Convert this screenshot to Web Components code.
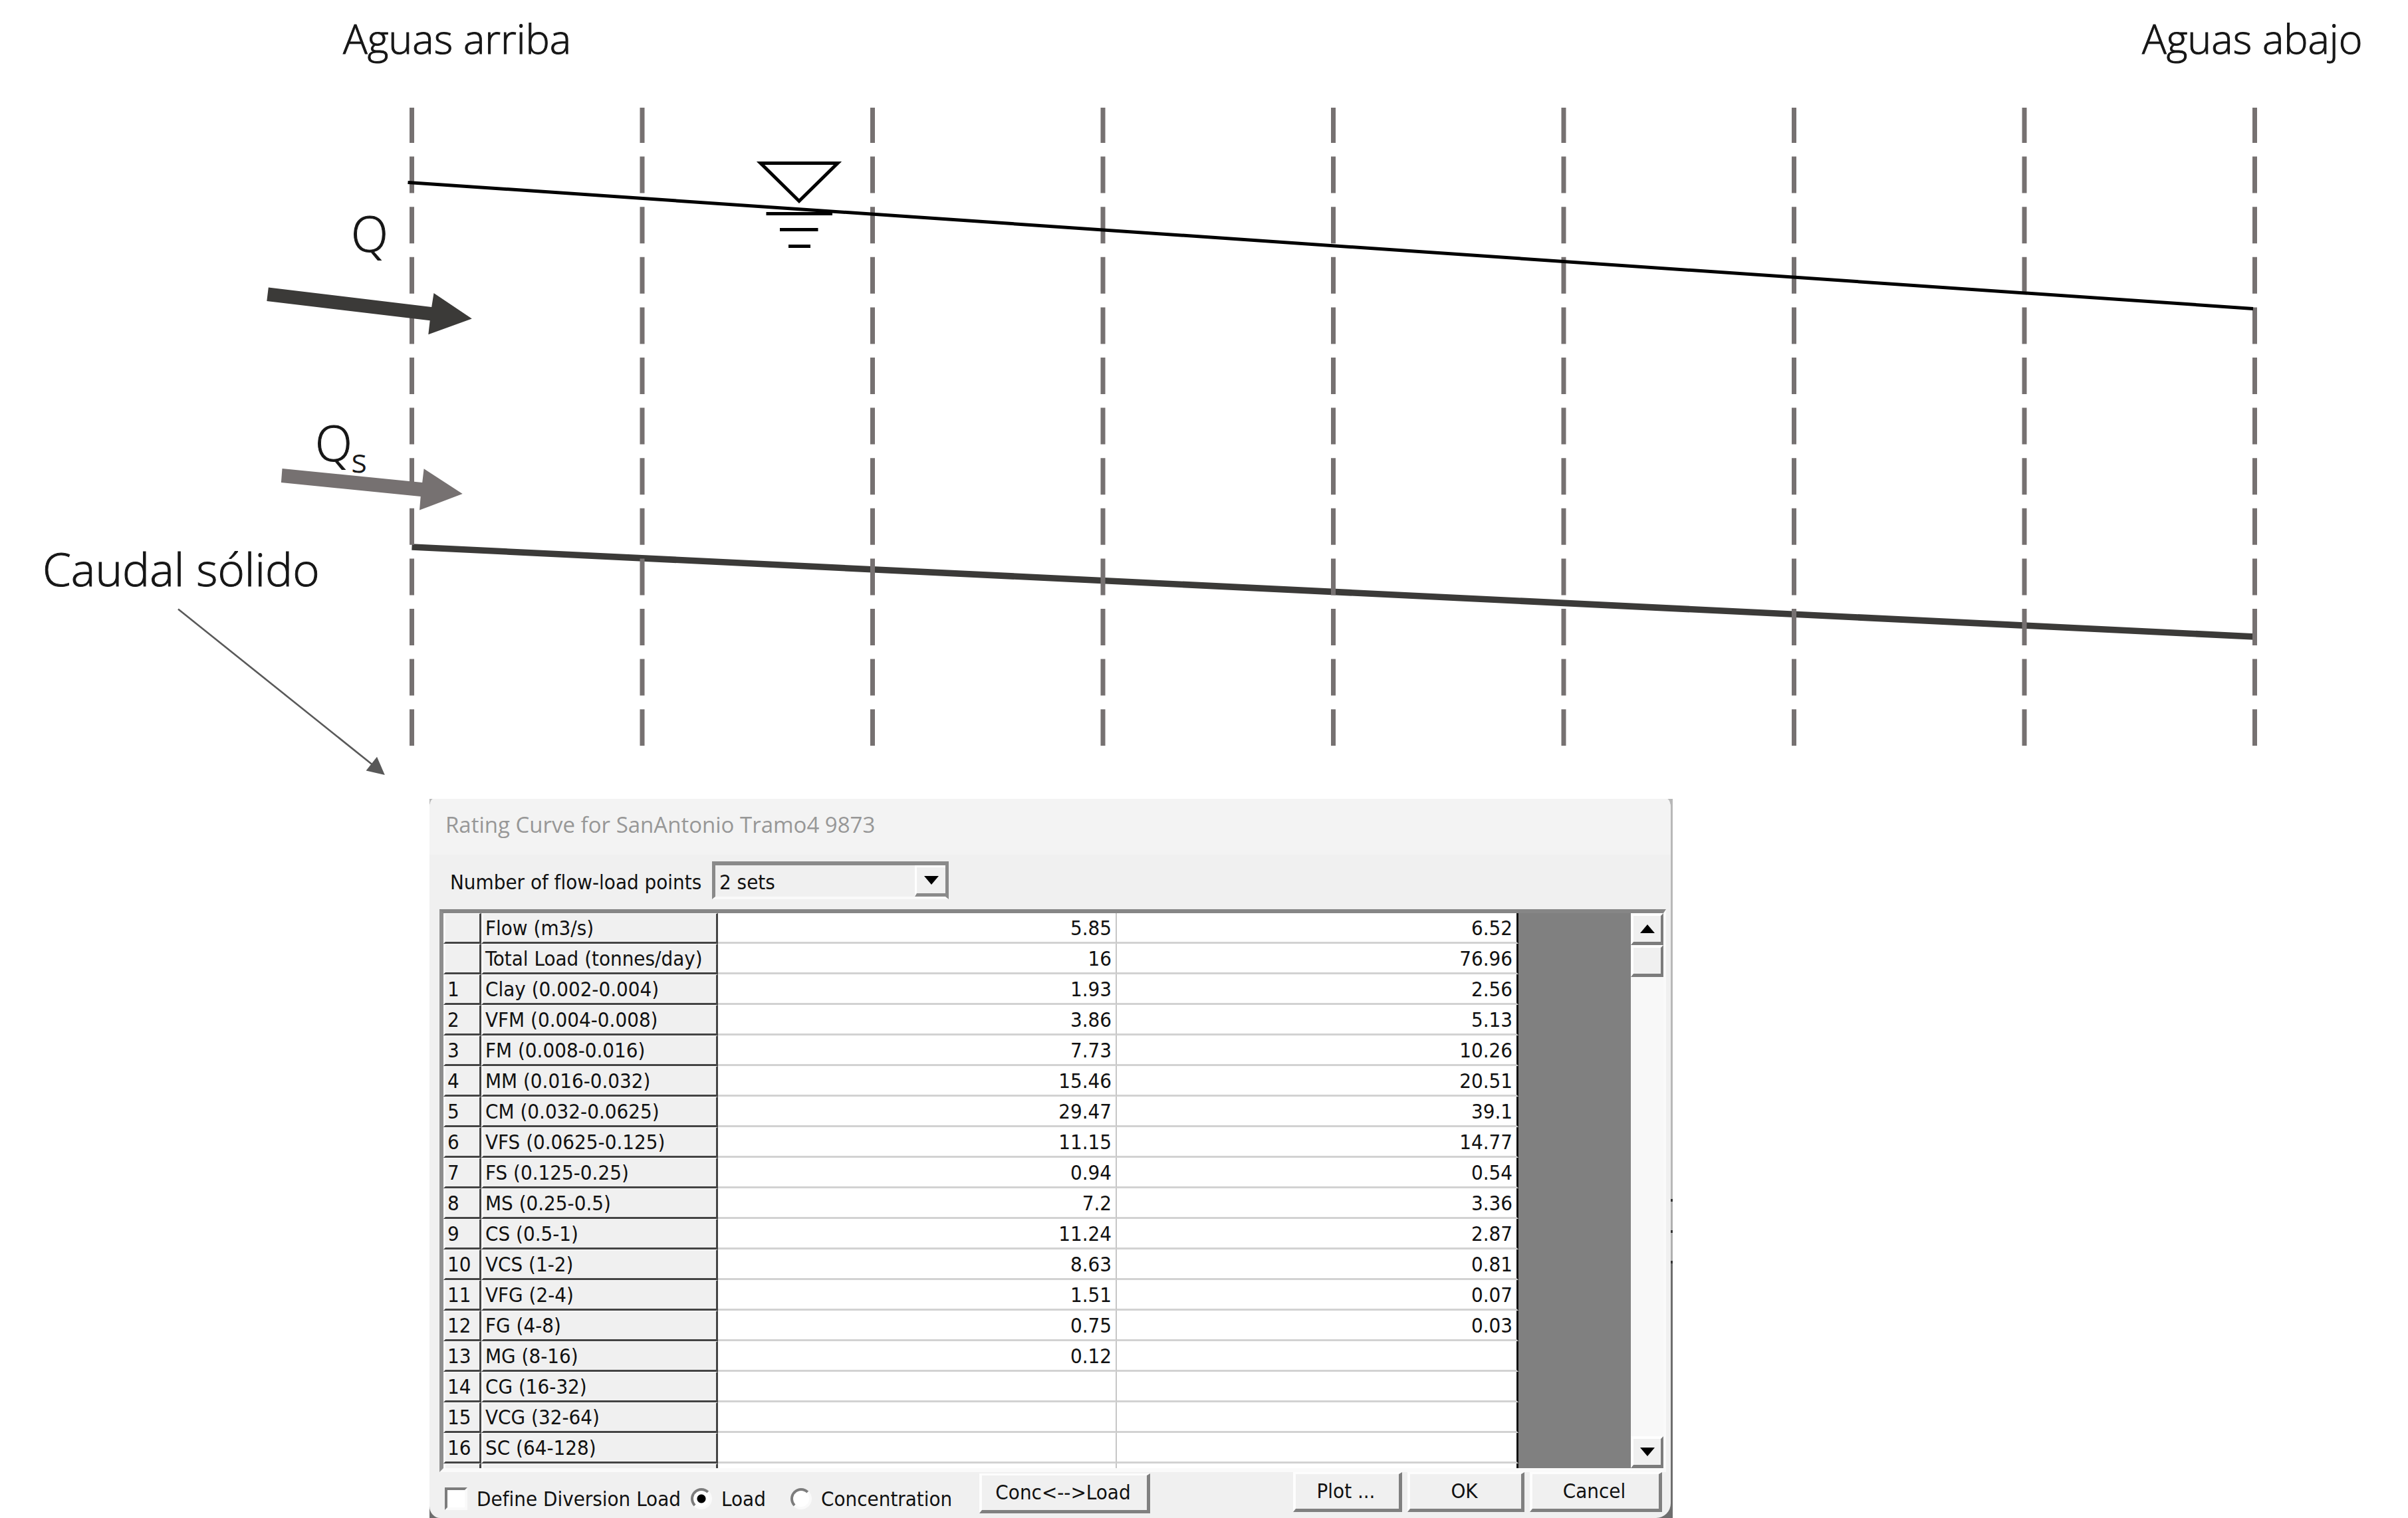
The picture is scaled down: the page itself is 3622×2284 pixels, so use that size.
<!DOCTYPE html>
<html lang="es">
<head>
<meta charset="utf-8">
<title>Rating Curve for SanAntonio Tramo4 9873</title>
<style>
  body { margin: 0; background: #fff; }
</style>
</head>
<body>
<sediment-page>
  <reach-profile slot="profile"></reach-profile>
  <rating-dialog slot="dialog" heading="Rating Curve for SanAntonio Tramo4 9873">
    <points-picker slot="picker"></points-picker>
    <load-grid slot="grid"></load-grid>
    <dialog-actions slot="actions"></dialog-actions>
  </rating-dialog>
</sediment-page>

<script>
const define = (name, html, setup) => customElements.define(name, class extends HTMLElement {
  constructor() {
    super();
    this.attachShadow({ mode: 'open' }).innerHTML = html;
  }
  connectedCallback() { if (setup) setup(this.shadowRoot, this); }
});

/* Page: the profile over a centred column for the dialog */
define('sediment-page', `
<style>
  :host { display: block; }
  .lower { display: grid; grid-template-columns: 646fr 1870fr 1106fr; }
  .lower ::slotted(*) { grid-column: 2; }
</style>
<slot name="profile"></slot>
<div class="lower"><slot name="dialog"></slot></div>`);

/* Longitudinal profile of the reach */
define('reach-profile', `
<style>
  :host { display: block; }
  svg { display: block; width: 100%; height: auto; }
  text { font-family: "Open Sans", "Noto Sans", sans-serif; font-weight: 300; fill: #161616; stroke: #161616; stroke-width: 1; }
  .end { font-size: 61px; }
  .flow { font-size: 69px; }
  .symbol { font-size: 73px; }
  .sub { font-size: 48px; }
  .section { stroke: #767171; stroke-width: 7; stroke-dasharray: 55 20.6; stroke-dashoffset: 2; }
</style>
<svg viewBox="0 0 3622 1202" role="img" aria-label="Perfil del tramo">
  <line x1="619.5" y1="823" x2="3391" y2="958" stroke="#3b3a38" stroke-width="9.6"/>
  <g id="sections"></g>
  <line x1="613.5" y1="274.4" x2="3389" y2="464.4" stroke="#000" stroke-width="5"/>
  <g fill="none" stroke="#000" stroke-width="5">
    <path d="M1144 245.5H1260L1202 302.5Z"/>
    <path d="M1152.5 321.5H1252M1173 345.5H1230.5M1186 370.5H1219"/>
  </g>
  <path fill="#3b3a38" d="M403.8 432.4L649.2 461.9L652.5 440.9L709.8 479.5L644.3 503.2L646.7 482.2L401.3 453.1Z"/>
  <path fill="#767171" d="M424.5 704.9L635.2 725.9L637.6 705.2L695.7 743.1L631 767.6L632.7 747L422.9 725.9Z"/>
  <path stroke="#595959" stroke-width="2.6" d="M268 916.5L562 1152"/>
  <path fill="#595959" d="M567 1138.8L578.8 1166L550.6 1159.5Z"/>
  <text class="end" x="516" y="81">Aguas arriba</text>
  <text class="end" x="3222" y="81">Aguas abajo</text>
  <text class="symbol" x="528" y="379">Q</text>
  <text class="symbol" x="474" y="694">Q<tspan class="sub" x="529" y="711">s</tspan></text>
  <text class="flow" x="64" y="882">Caudal sólido</text>
</svg>`, root => {
  const g = root.getElementById('sections');
  for (let i = 0; i < 9; i++) {
    const l = document.createElementNS('http://www.w3.org/2000/svg', 'line');
    const x = 619.5 + i * 346.5;
    l.setAttribute('class', 'section');
    l.setAttribute('x1', x); l.setAttribute('x2', x);
    l.setAttribute('y1', 162); l.setAttribute('y2', 1122);
    g.append(l);
  }
});

/* Dialog window */
define('rating-dialog', `
<style>
  :host { display: block; padding-right: 3px; color: #111; font: 31px/40px "DejaVu Sans Condensed", "DejaVu Sans", sans-serif;
    background: linear-gradient(#b8b8b8 602px, #333 602px 606px, #b0b0b0 606px 649px, #333 649px 653px, #b0b0b0 653px 695px, #333 695px 699px, #6e6e6e 699px); }
  section { background: #f0f0f0; border-radius: 6px 6px 22px 16px / 14px 14px 22px 18px; overflow: hidden; }
  h1 { margin: 0; padding: 20px 24px; height: 44px; line-height: 38px; background: #f3f3f3; color: #979797;
       font-family: "Open Sans", "Noto Sans", sans-serif; font-size: 33px; font-weight: 400; }
  .picker { padding: 10px 31px 15px; }
  .grid { padding: 0 7px 0 15px; }
</style>
<section>
  <h1></h1>
  <div class="picker"><slot name="picker"></slot></div>
  <div class="grid"><slot name="grid"></slot></div>
  <slot name="actions"></slot>
</section>`, (root, host) => {
  root.querySelector('h1').textContent = host.getAttribute('heading');
});

define('points-picker', `
<style>
  :host { display: flex; align-items: center; }
  label { width: 394px; padding-top: 4px; white-space: nowrap; }
  .combo { display: flex; box-sizing: border-box; width: 356px; height: 57px; border: solid; border-width: 6px 5px 4px; border-color: #8a8a8a #8a8a8a #fafafa #8a8a8a; }
  select { appearance: none; flex: 1; min-width: 0; margin: 0; padding: 3px 6px 0; border: 0; background: none; color: inherit; font: inherit; }
  .arrow { display: grid; place-items: center; box-sizing: border-box; width: 46px; border: solid; border-width: 3px 0 5px 3px; border-color: #fff #fff #8a8a8a #fff; }
</style>
<label for="sets">Number of flow-load points</label>
<div class="combo">
  <select id="sets"><option>2 sets</option></select>
  <span class="arrow"><svg width="22" height="13" viewBox="0 0 22 13"><path d="M0 0H22L11 13Z"/></svg></span>
</div>`);

const ROWS = [
  ['', 'Flow (m3/s)', '5.85', '6.52'], ['', 'Total Load (tonnes/day)', '16', '76.96'],
  ['1', 'Clay (0.002-0.004)', '1.93', '2.56'], ['2', 'VFM (0.004-0.008)', '3.86', '5.13'],
  ['3', 'FM (0.008-0.016)', '7.73', '10.26'], ['4', 'MM (0.016-0.032)', '15.46', '20.51'],
  ['5', 'CM (0.032-0.0625)', '29.47', '39.1'], ['6', 'VFS (0.0625-0.125)', '11.15', '14.77'],
  ['7', 'FS (0.125-0.25)', '0.94', '0.54'], ['8', 'MS (0.25-0.5)', '7.2', '3.36'],
  ['9', 'CS (0.5-1)', '11.24', '2.87'], ['10', 'VCS (1-2)', '8.63', '0.81'],
  ['11', 'VFG (2-4)', '1.51', '0.07'], ['12', 'FG (4-8)', '0.75', '0.03'],
  ['13', 'MG (8-16)', '0.12', ''], ['14', 'CG (16-32)', '', ''],
  ['15', 'VCG (32-64)', '', ''], ['16', 'SC (64-128)', '', ''], ['', '', '', '']
];

define('load-grid', `
<style>
  :host { display: flex; box-sizing: border-box; height: 847px; border: 6px solid; border-color: #868686 #fafafa #fafafa #8e8e8e; border-right-width: 4px; background: #808080; overflow: hidden; }
  table { flex: 1617; width: 0; height: max-content; border-collapse: separate; border-spacing: 0; table-layout: fixed; }
  .rest { flex: 169; }
  th, td { box-sizing: border-box; height: 46px; padding: 0; line-height: 42px; white-space: nowrap; font-weight: 400; }
  th { background: #f0f0f0; text-align: left; border-right: 3px solid #444; border-bottom: 3px solid #444; border-top: 1px solid #fcfcfc; border-left: 3px solid #fafafa; padding-left: 3px; }
  td { background: #fff; text-align: right; border-right: 2px solid #c6c6c6; border-bottom: 3px solid #d2d2d2; padding-right: 6px; }
  td:last-child { border-right: 3px solid #111; }
</style>
<table aria-label="Rating curve">
  <colgroup><col style="width:57px"><col style="width:356px"><col style="width:600px"><col></colgroup>
  <tbody></tbody>
</table>
<div class="rest"></div>
<scroll-rail></scroll-rail>`, root => {
  root.querySelector('tbody').innerHTML = ROWS.map(([n, name, a, b]) =>
    `<tr><th>${n}</th><th scope="row">${name}</th><td>${a}</td><td>${b}</td></tr>`).join('');
});

define('scroll-rail', `
<style>
  :host { display: flex; flex: none; flex-direction: column; width: 49px; background: #f8f8f8; }
  button, .thumb { display: grid; place-items: center; box-sizing: border-box; width: 100%; height: 48px; margin: 0; padding: 0; background: #f0f0f0;
    border: solid; border-width: 4px 4px 5px 4px; border-color: #fff #7c7c7c #7c7c7c #fff; }
  .track { flex: 1; }
</style>
<button aria-label="Up"><svg width="22" height="13" viewBox="0 0 22 13"><path d="M0 13H22L11 0Z"/></svg></button>
<div class="track"><div class="thumb"></div></div>
<button aria-label="Down"><svg width="22" height="13" viewBox="0 0 22 13"><path d="M0 0H22L11 13Z"/></svg></button>`);

define('dialog-actions', `
<style>
  :host { display: flex; align-items: flex-start; height: 69px; padding: 0 13px 0 23px; }
  .choices { display: flex; align-items: center; padding-top: 20px; height: 40px; }
  label { white-space: nowrap; }
  input { appearance: none; flex: none; box-sizing: border-box; margin: 0; background: #fff; border: 4px solid; border-color: #7c7c7c #fafafa #fafafa #7c7c7c; }
  input[type=checkbox] { width: 34px; height: 34px; margin-right: 14px; }
  input[type=radio] { width: 32px; height: 32px; border-radius: 50%; margin-right: 14px; }
  input[type=radio]:checked { background: radial-gradient(circle, #000 6px, #fff 7px); }
  .first { width: 370px; display: flex; align-items: center; }
  .second { width: 150px; display: flex; align-items: center; }
  .third { width: 284px; display: flex; align-items: center; }
  button { box-sizing: border-box; height: 60px; margin: 0; padding: 0 4px 2px 0; background: #f0f0f0; color: inherit; font: inherit;
    border: solid; border-width: 3px 5px 5px 4px; border-color: #fdfdfd #808080 #808080 #fdfdfd; }
  .conc { width: 257px; margin-top: 2px; }
  .right { display: flex; gap: 8px; margin-left: auto; }
  .plot { width: 164px; } .ok { width: 176px; } .cancel { width: 199px; }
</style>
<div class="choices">
  <span class="first"><input type="checkbox" id="div"><label for="div">Define Diversion Load</label></span>
  <span class="second"><input type="radio" name="mode" id="load" checked><label for="load">Load</label></span>
  <span class="third"><input type="radio" name="mode" id="con"><label for="con">Concentration</label></span>
</div>
<button class="conc">Conc&lt;--&gt;Load</button>
<div class="right">
  <button class="plot">Plot ...</button>
  <button class="ok">OK</button>
  <button class="cancel">Cancel</button>
</div>`);
</script>
</body>
</html>
